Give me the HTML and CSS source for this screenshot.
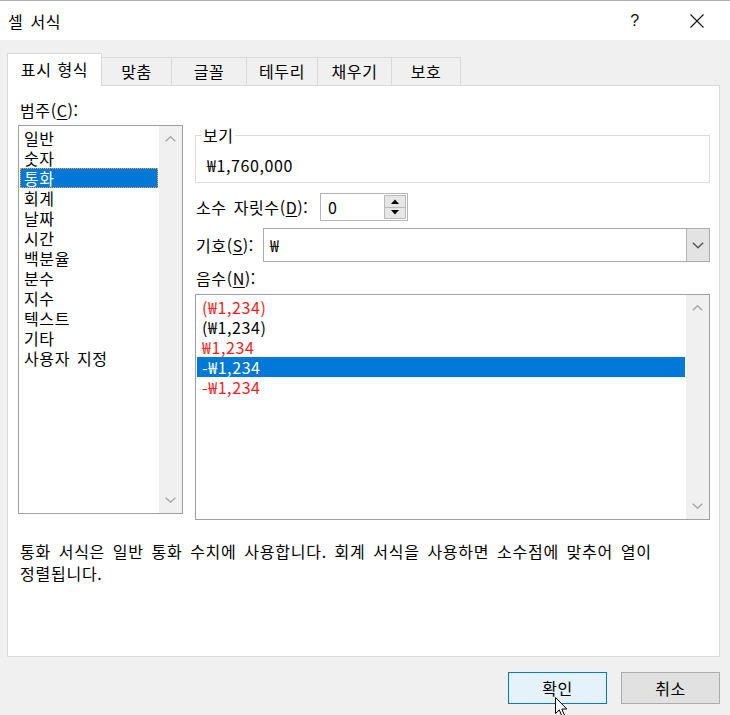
FILE: index.html
```html
<!DOCTYPE html>
<html lang="ko">
<head>
<meta charset="utf-8">
<title>셀 서식</title>
<link rel="stylesheet" href="styles.css">
</head>
<body>
<div class="window">
  <div class="titlebar">
    <span class="title">셀 서식</span>
    <span class="help">?</span>
    <span class="close"><svg width="14" height="14" viewBox="0 0 14 14"><path d="M0.5 0.5 L13.5 13.5 M13.5 0.5 L0.5 13.5" stroke="#111" stroke-width="1.1" fill="none"/></svg></span>
  </div>

  <div class="tabs">
    <div class="tab active w1">표시 형식</div>
    <div class="tab w2">맞춤</div>
    <div class="tab w3">글꼴</div>
    <div class="tab w4">테두리</div>
    <div class="tab w5">채우기</div>
    <div class="tab w6">보호</div>
  </div>

  <div class="panel">
    <div class="columns">
      <div class="left">
        <div class="label cat-label">범주(<u>C</u>):</div>
        <div class="listbox cat">
          <ul class="items">
            <li class="item">일반</li>
            <li class="item">숫자</li>
            <li class="item selected focus">통화</li>
            <li class="item">회계</li>
            <li class="item">날짜</li>
            <li class="item">시간</li>
            <li class="item">백분율</li>
            <li class="item">분수</li>
            <li class="item">지수</li>
            <li class="item">텍스트</li>
            <li class="item">기타</li>
            <li class="item">사용자 지정</li>
          </ul>
          <div class="scroll">
            <span class="arrow"><svg width="11" height="6" viewBox="0 0 11 6"><path d="M0.7 5.3 L5.5 0.8 L10.3 5.3" stroke="#a6a6a6" stroke-width="1.4" fill="none"/></svg></span>
            <span class="arrow"><svg width="11" height="6" viewBox="0 0 11 6"><path d="M0.7 0.7 L5.5 5.2 L10.3 0.7" stroke="#a6a6a6" stroke-width="1.4" fill="none"/></svg></span>
          </div>
        </div>
      </div>

      <div class="right">
        <fieldset class="sample">
          <legend class="sample-legend">보기</legend>
          <div class="sample-value">₩1,760,000</div>
        </fieldset>

        <div class="row decimal-row">
          <span class="label row-label decimal-label">소수 자릿수(<u>D</u>):</span>
          <div class="spin">
            <span class="spin-value">0</span>
            <div class="spin-buttons">
              <span class="spin-btn"><svg width="8" height="5" viewBox="0 0 8 5"><path d="M0 5 L4 0.5 L8 5 Z" fill="#000"/></svg></span>
              <span class="spin-btn"><svg width="8" height="5" viewBox="0 0 8 5"><path d="M0 0 L8 0 L4 4.5 Z" fill="#000"/></svg></span>
            </div>
          </div>
        </div>

        <div class="row symbol-row">
          <span class="label row-label symbol-label">기호(<u>S</u>):</span>
          <div class="combo">
            <span class="combo-value">₩</span>
            <span class="combo-btn"><svg width="12" height="7" viewBox="0 0 12 7"><path d="M0.8 0.8 L6 5.8 L11.2 0.8" stroke="#555" stroke-width="1.4" fill="none"/></svg></span>
          </div>
        </div>

        <div class="label neg-label">음수(<u>N</u>):</div>
        <div class="listbox neg">
          <ul class="items">
            <li class="item red">(₩1,234)</li>
            <li class="item">(₩1,234)</li>
            <li class="item red">₩1,234</li>
            <li class="item selected">-₩1,234</li>
            <li class="item red">-₩1,234</li>
          </ul>
          <div class="scroll">
            <span class="arrow"><svg width="11" height="6" viewBox="0 0 11 6"><path d="M0.7 5.3 L5.5 0.8 L10.3 5.3" stroke="#a6a6a6" stroke-width="1.4" fill="none"/></svg></span>
            <span class="arrow"><svg width="11" height="6" viewBox="0 0 11 6"><path d="M0.7 0.7 L5.5 5.2 L10.3 0.7" stroke="#a6a6a6" stroke-width="1.4" fill="none"/></svg></span>
          </div>
        </div>
      </div>
    </div>

    <p class="desc">통화 서식은 일반 통화 수치에 사용합니다. 회계 서식을 사용하면 소수점에 맞추어 열이<br>정렬됩니다.</p>
  </div>

  <div class="buttons">
    <button class="btn primary">확인</button>
    <button class="btn">취소</button>
  </div>

  <svg class="cursor" width="14" height="21" viewBox="0 0 14 21"><path d="M0.5 0.5 L0.5 16.5 L4.3 12.9 L6.9 19.2 L9.4 18.1 L6.8 12 L11.8 12 Z" fill="#fff" stroke="#000" stroke-width="1" stroke-linejoin="miter"/></svg>
</div>
</body>
</html>
```

FILE: styles.css
```css
* { box-sizing: border-box; }
html, body { margin: 0; padding: 0; }
body {
  width: 730px;
  height: 715px;
  overflow: hidden;
  background: #f0f0f0;
  font-family: "Noto Sans CJK KR", "Noto Sans", sans-serif;
  font-size: 16px;
  letter-spacing: 0.6px;
  word-spacing: 2px;
  color: #000;
}
.window { position: relative; width: 730px; height: 715px; }

/* title bar */
.titlebar {
  height: 40px;
  background: #fff;
  border-top: 1px solid #acacac;
  display: flex;
  align-items: center;
}
.title { flex: 1; padding-left: 8px; font-size: 16px; line-height: 20px; }
.help {
  width: 46px;
  text-align: center;
  font-family: "Liberation Sans", sans-serif;
  font-size: 16px;
  margin-right: 16px;
  color: #111;
}
.close {
  width: 46px;
  margin-right: 10px;
  display: flex;
  justify-content: center;
  align-items: center;
}

/* tabs */
.tabs {
  height: 45px;
  padding-left: 7px;
  display: flex;
  align-items: flex-end;
  position: relative;
  z-index: 2;
}
.tab {
  height: 28px;
  line-height: 27px;
  border: 1px solid #d9d9d9;
  border-bottom: none;
  margin-left: -1px;
  text-align: center;
  background: #f0f0f0;
  font-size: 16px;
  word-spacing: 1px;
}
.tab:first-child { margin-left: 0; }
.tab.active {
  height: 33px;
  line-height: 31px;
  margin-bottom: -1px;
  background: #fff;
  position: relative;
  z-index: 3;
}
.w1 { width: 95px; }
.w2 { width: 71px; }
.w3 { width: 76px; }
.w4 { width: 72px; }
.w5 { width: 75px; }
.w6 { width: 70px; }

/* panel */
.panel {
  margin-left: 7px;
  width: 713px;
  height: 572px;
  background: #fff;
  border: 1px solid #d9d9d9;
  padding: 14px 9px 0 10px;
  position: relative;
  z-index: 1;
}
.columns { display: flex; align-items: flex-start; }
.left { width: 165px; }
.right { width: 515px; margin-left: 12px; padding-top: 26px; }

.label { line-height: 20px; height: 20px; white-space: nowrap; }
.label u { text-decoration-thickness: 1px; text-underline-offset: 2px; }
.cat-label { margin-left: 2px; margin-bottom: 5px; }

/* list boxes */
.listbox {
  display: flex;
  border: 1px solid #a0a0a0;
  background: #fff;
}
.listbox.cat { height: 389px; }
.listbox.neg { height: 226px; }
.items {
  list-style: none;
  margin: 0;
  padding: 2px 1px 0 1px;
  flex: 1;
}
.item {
  height: 20px;
  line-height: 20px;
  padding-left: 4px;
  white-space: nowrap;
}
.item.red { color: #ff1a1a; }
.item.selected { background: #0078d7; color: #fff; }
.item.focus { outline: 1px dotted #ffa040; outline-offset: -1px; }
.neg .item { padding-left: 5px; }
.scroll {
  width: 23px;
  background: #f0f0f0;
  display: flex;
  flex-direction: column;
  justify-content: space-between;
}
.arrow {
  height: 26px;
  display: flex;
  align-items: center;
  justify-content: center;
}

/* sample group */
.sample {
  margin: 0;
  height: 57px;
  padding: 0 6px;
  border: 1px solid #dcdcdc;
  min-width: 0;
}
.sample-legend {
  padding: 0 1px;
  line-height: 18px;
}
.sample-value {
  margin-top: 11px;
  padding-left: 5px;
  line-height: 20px;
}

/* rows */
.row { display: flex; align-items: center; }
.decimal-row { margin-top: 10px; height: 28px; }
.symbol-row { margin-top: 7px; height: 34px; }
.row-label { padding-left: 1px; }
.decimal-label { width: 125px; }
.symbol-label { width: 68px; }

.spin {
  width: 88px;
  height: 28px;
  border: 1px solid #b4b4b4;
  display: flex;
  background: #fff;
}
.spin-value { flex: 1; padding-left: 7px; line-height: 26px; }
.spin-buttons {
  width: 23px;
  display: flex;
  flex-direction: column;
  padding: 1px 1px 1px 0;
}
.spin-btn {
  flex: 1;
  background: #e6e6e6;
  border: 1px solid #b9b9b9;
  display: flex;
  align-items: center;
  justify-content: center;
}
.spin-btn + .spin-btn { border-top: none; }

.combo {
  width: 447px;
  height: 34px;
  border: 1px solid #acacac;
  background: #fff;
  display: flex;
}
.combo-value { flex: 1; padding-left: 6px; line-height: 32px; }
.combo-btn {
  width: 23px;
  background: #e3e3e3;
  border-left: 1px solid #b4b4b4;
  display: flex;
  align-items: center;
  justify-content: center;
}

.neg-label { margin-top: 6px; margin-bottom: 6px; padding-left: 1px; }

/* description */
.desc {
  margin: 20px 0 0 2px;
  line-height: 22px;
  white-space: nowrap;
  letter-spacing: 0.75px;
  word-spacing: 2.5px;
}

/* buttons */
.buttons {
  margin-top: 15px;
  padding-right: 10px;
  display: flex;
  justify-content: flex-end;
  gap: 14px;
}
.btn {
  width: 99px;
  height: 32px;
  font-family: inherit;
  font-size: 16px;
  letter-spacing: 0.6px;
  color: #000;
  background: #e1e1e1;
  border: 1px solid #adadad;
  padding: 0;
  line-height: 28px;
}
.btn.primary {
  background: #e5f1fb;
  border: 1px solid #0078d7;
}

.cursor {
  position: absolute;
  left: 555px;
  top: 697px;
  z-index: 10;
}
```
